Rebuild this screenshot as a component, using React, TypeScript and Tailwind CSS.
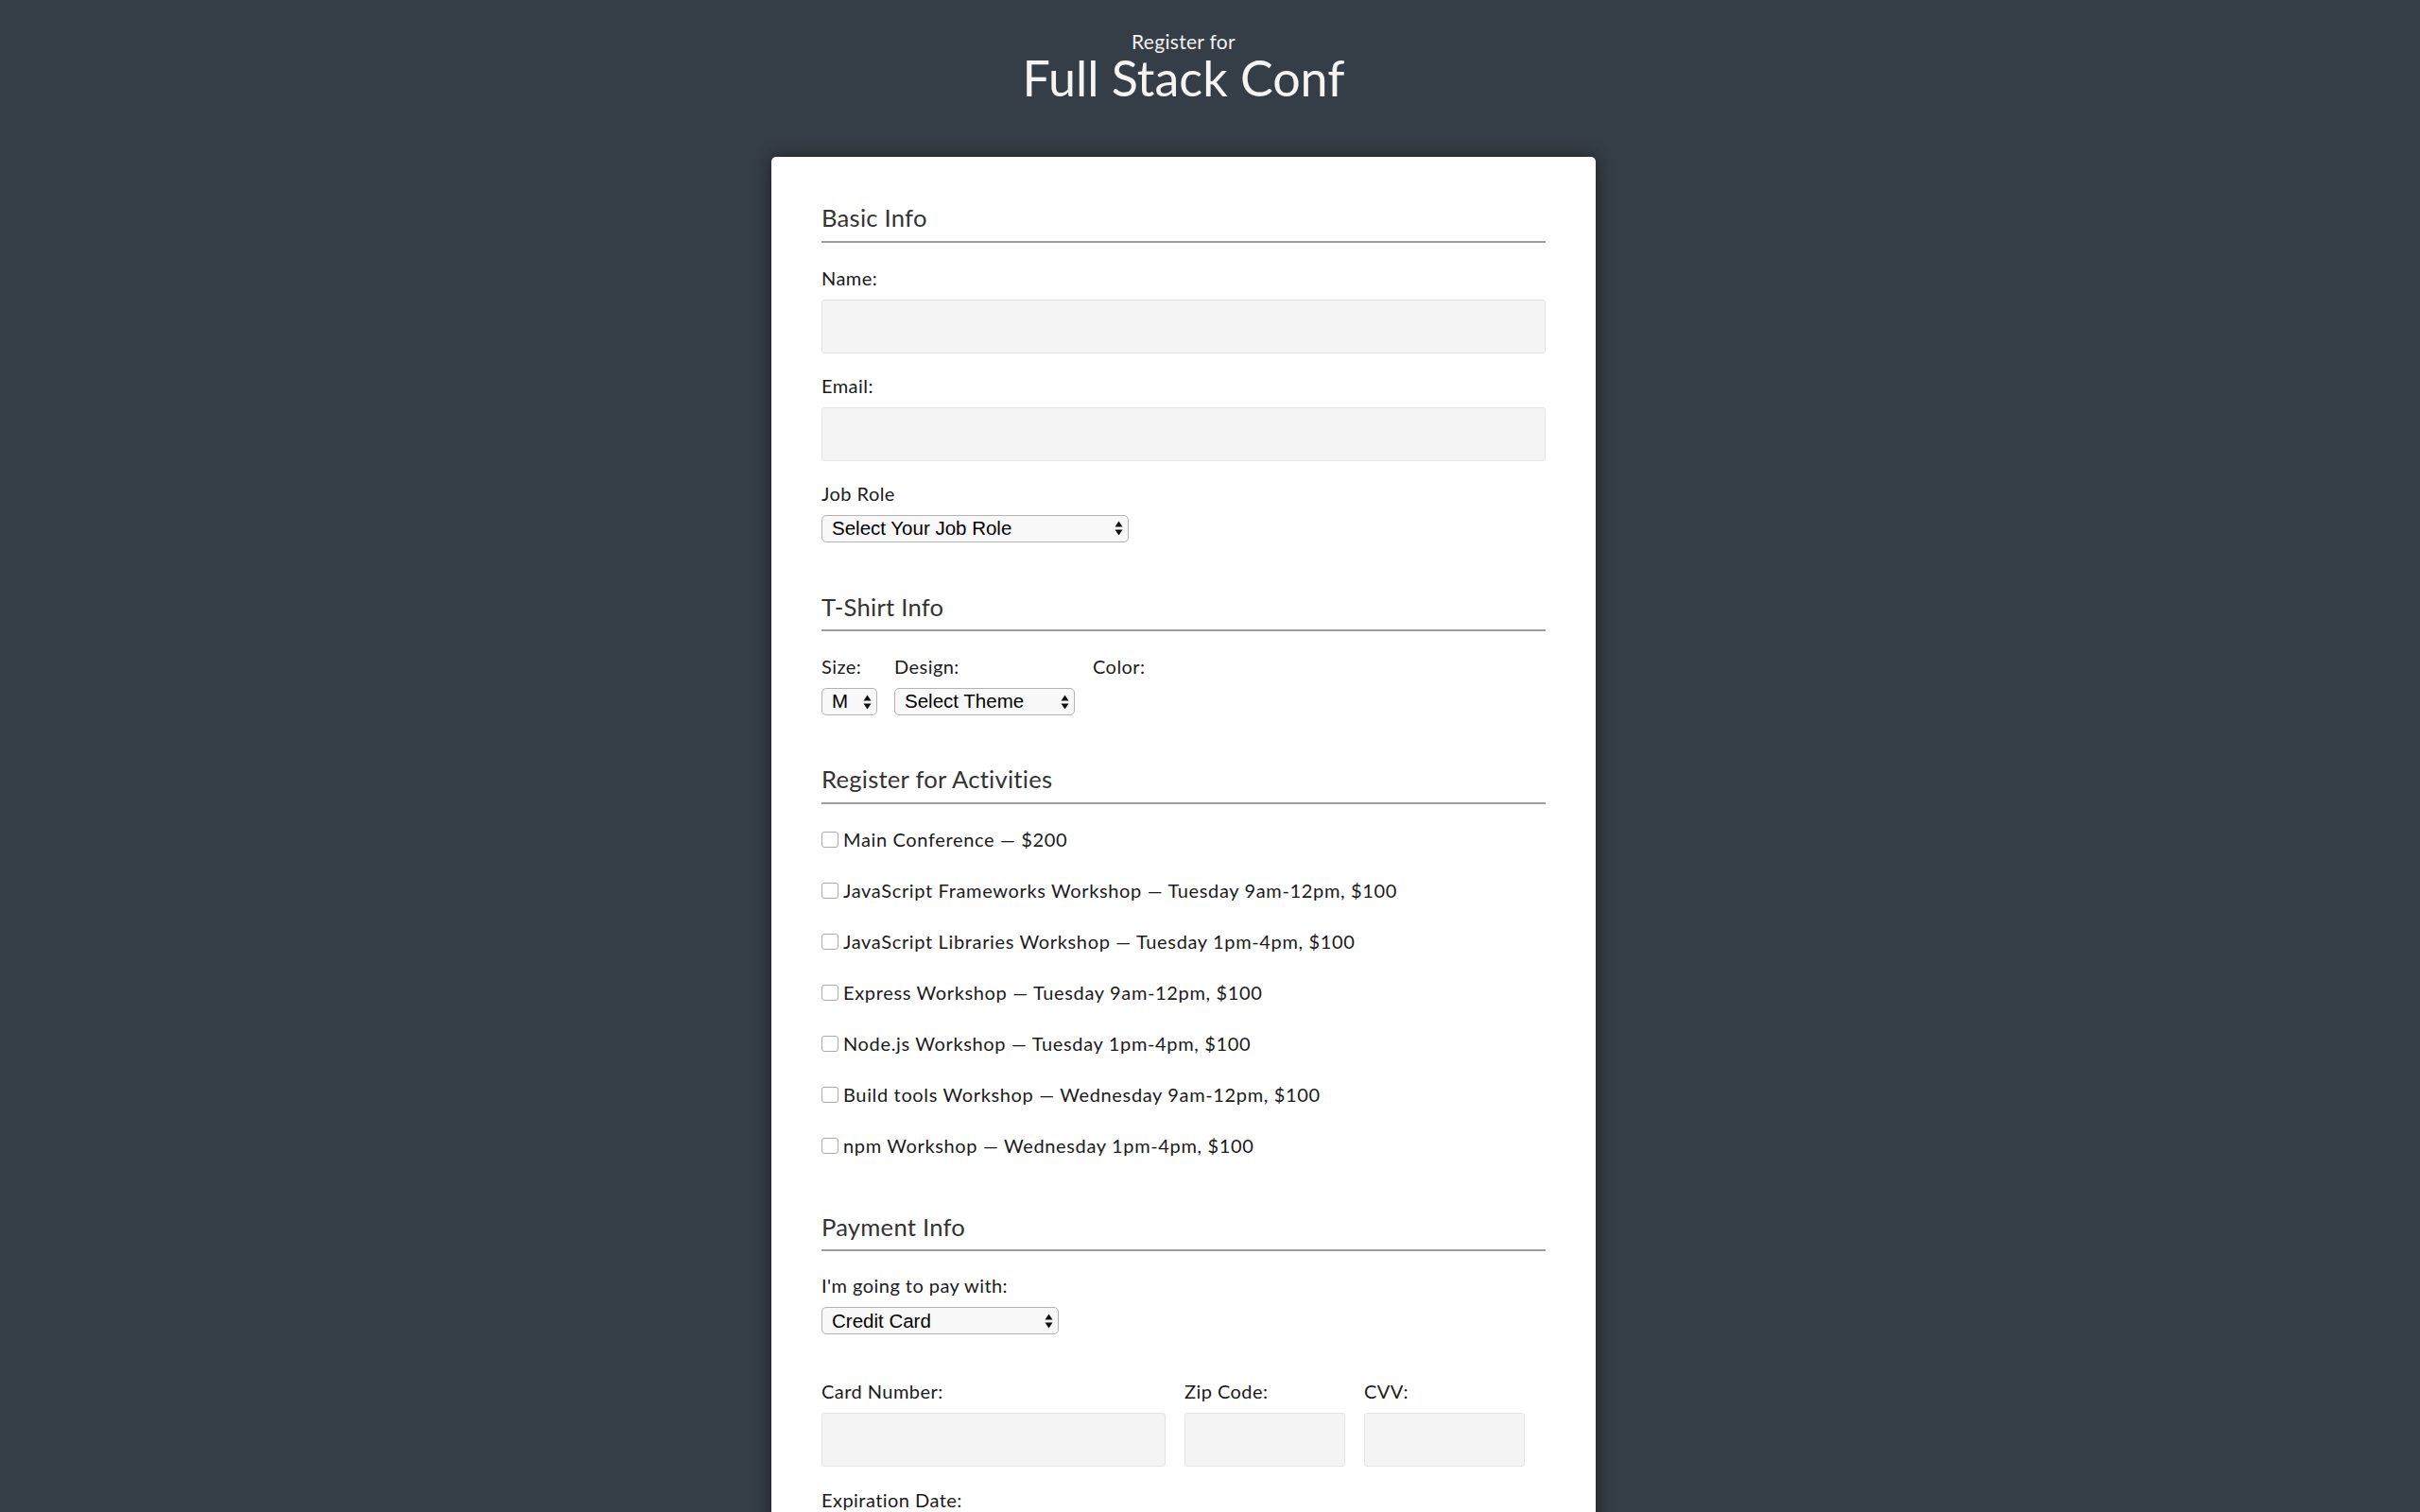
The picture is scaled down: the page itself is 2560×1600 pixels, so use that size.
import React from "react";

const ACTIVITIES = [
  "Main Conference — $200",
  "JavaScript Frameworks Workshop — Tuesday 9am-12pm, $100",
  "JavaScript Libraries Workshop — Tuesday 1pm-4pm, $100",
  "Express Workshop — Tuesday 9am-12pm, $100",
  "Node.js Workshop — Tuesday 1pm-4pm, $100",
  "Build tools Workshop — Wednesday 9am-12pm, $100",
  "npm Workshop — Wednesday 1pm-4pm, $100",
];

const font = "font-['Lato','Noto_Sans',sans-serif]";

function Heading({ children }: { children: React.ReactNode }) {
  return (
    <h2 className="text-[25.6px] leading-none tracking-[0.25px] text-[#333] border-b-2 border-[#9e9e9e] pb-[11px]">
      {children}
    </h2>
  );
}

function Label({ children }: { children: React.ReactNode }) {
  return (
    <label className="block text-[20px] leading-none tracking-[0.45px] text-[#1a1a1a] mb-[13px]">
      {children}
    </label>
  );
}

function TextInput({ className = "" }: { className?: string }) {
  return (
    <input
      type="text"
      className={`block h-[57px] bg-[#f4f4f4] border border-[#e4e4e4] rounded-[3px] outline-none ${className}`}
    />
  );
}

// macOS-style select with the double arrow drawn on top
function Select({ width, options }: { width: string; options: string[] }) {
  return (
    <div className={`relative ${width}`}>
      <select className="appearance-none w-full h-[29px] pl-[10px] pr-[24px] bg-[#f8f8f8] border border-[#b3b3b3] rounded-[5px] text-[20.5px] leading-none text-black font-['Liberation_Sans',Arial,sans-serif] outline-none">
        {options.map((o) => (
          <option key={o}>{o}</option>
        ))}
      </select>
      <svg
        className="absolute right-[6px] top-1/2 -translate-y-1/2 pointer-events-none"
        width="9"
        height="17"
        viewBox="0 0 9 17"
      >
        <path d="M4.5 1 L8.5 7 H0.5 Z" fill="#111" />
        <path d="M4.5 16 L8.5 10 H0.5 Z" fill="#111" />
      </svg>
    </div>
  );
}

export default function App() {
  return (
    <div className={`min-h-screen bg-[#353d46] pr-[56px] pb-[80px] ${font}`}>
      <header className="text-center pt-[33px]">
        <p className="text-[21px] leading-none tracking-[0.3px] text-[#f2f2f2]">Register for</p>
        <h1 className="text-[52px] leading-none text-[#f4f4f4] mt-[2px]">Full Stack Conf</h1>
      </header>

      <form className="w-[872px] mx-auto mt-[58px] bg-white rounded-[5px] shadow-[0_0_18px_rgba(0,0,0,0.45)] px-[53px] pt-[52px] pb-[60px]">
        <section>
          <Heading>Basic Info</Heading>
          <div className="mt-[27px]">
            <Label>Name:</Label>
            <TextInput className="w-full" />
          </div>
          <div className="mt-[24px]">
            <Label>Email:</Label>
            <TextInput className="w-full" />
          </div>
          <div className="mt-[24px]">
            <Label>Job Role</Label>
            <Select width="w-[325px]" options={["Select Your Job Role", "Full Stack JavaScript Developer", "Front End Developer", "Back End Developer", "Designer", "Student", "Other"]} />
          </div>
        </section>

        <section className="mt-[56px]">
          <Heading>T-Shirt Info</Heading>
          <div className="flex mt-[27px]">
            <div className="mr-[18px]">
              <Label>Size:</Label>
              <Select width="w-[59px]" options={["M", "S", "L", "XL"]} />
            </div>
            <div className="mr-[19px]">
              <Label>Design:</Label>
              <Select width="w-[191px]" options={["Select Theme", "Theme - JS Puns", "Theme - I ♥ JS"]} />
            </div>
            <div>
              <Label>Color:</Label>
            </div>
          </div>
        </section>

        <section className="mt-[55px]">
          <Heading>Register for Activities</Heading>
          <div className="mt-[25px] flex flex-col gap-[30px]">
            {ACTIVITIES.map((a) => (
              <label
                key={a}
                className="flex items-center h-[24px] text-[20px] leading-[1.2] tracking-[0.65px] text-[#1a1a1a]"
              >
                <input
                  type="checkbox"
                  className="appearance-none relative top-[1px] w-[18px] h-[17px] border border-[#ababab] rounded-[3px] bg-white mr-[5px] shrink-0"
                />
                {a}
              </label>
            ))}
          </div>
        </section>

        <section className="mt-[62px]">
          <Heading>Payment Info</Heading>
          <div className="mt-[26px]">
            <Label>I'm going to pay with:</Label>
            <Select width="w-[251px]" options={["Credit Card", "PayPal", "Bitcoin"]} />
          </div>
          <div className="flex mt-[50px]">
            <div className="mr-[20px]">
              <Label>Card Number:</Label>
              <TextInput className="w-[364px]" />
            </div>
            <div className="mr-[20px]">
              <Label>Zip Code:</Label>
              <TextInput className="w-[170px]" />
            </div>
            <div>
              <Label>CVV:</Label>
              <TextInput className="w-[170px]" />
            </div>
          </div>
          <div className="mt-[25px]">
            <Label>Expiration Date:</Label>
            <div className="flex gap-[18px]">
              <Select width="w-[200px]" options={["1 - January", "2 - February", "3 - March"]} />
              <Select width="w-[110px]" options={["2016", "2017", "2018"]} />
            </div>
          </div>
        </section>

        <button type="button" className="mt-[48px] px-[28px] h-[58px] rounded-[5px] bg-[#22627e] text-white text-[22px]">
          Register
        </button>
      </form>
    </div>
  );
}
